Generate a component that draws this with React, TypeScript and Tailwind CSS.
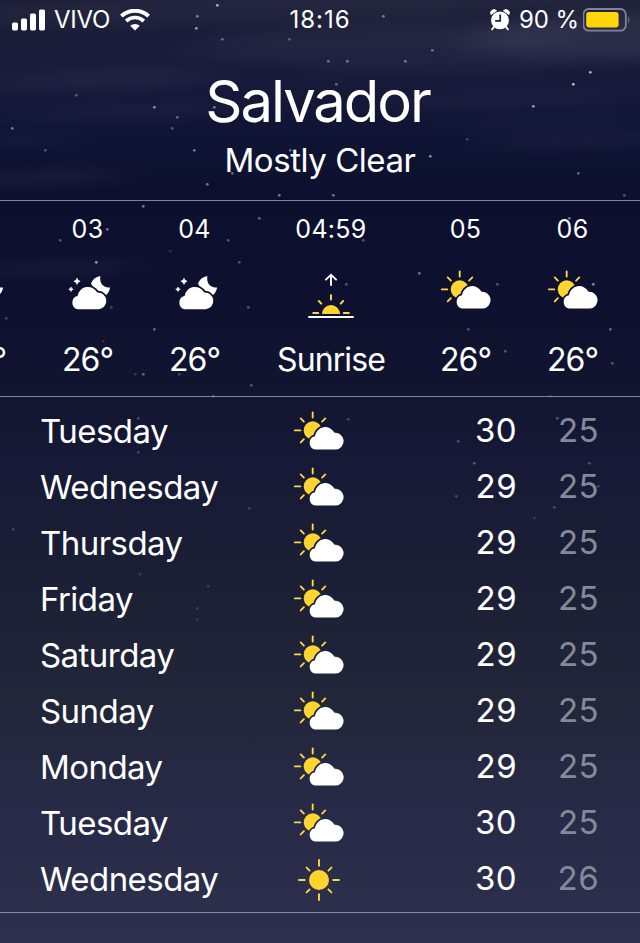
import React, { useId } from "react";

type IconName = "moon" | "partly" | "sunrise" | "sun";

const hours: { time: string; icon: IconName; value: string }[] = [
  { time: "", icon: "moon", value: "26°" },
  { time: "03", icon: "moon", value: "26°" },
  { time: "04", icon: "moon", value: "26°" },
  { time: "04:59", icon: "sunrise", value: "Sunrise" },
  { time: "05", icon: "partly", value: "26°" },
  { time: "06", icon: "partly", value: "26°" },
];

const days: { name: string; icon: IconName; high: number; low: number }[] = [
  { name: "Tuesday", icon: "partly", high: 30, low: 25 },
  { name: "Wednesday", icon: "partly", high: 29, low: 25 },
  { name: "Thursday", icon: "partly", high: 29, low: 25 },
  { name: "Friday", icon: "partly", high: 29, low: 25 },
  { name: "Saturday", icon: "partly", high: 29, low: 25 },
  { name: "Sunday", icon: "partly", high: 29, low: 25 },
  { name: "Monday", icon: "partly", high: 29, low: 25 },
  { name: "Tuesday", icon: "partly", high: 30, low: 25 },
  { name: "Wednesday", icon: "sun", high: 30, low: 26 },
];

// x, y, opacity
const stars = [
  [217, 5, 0.9], [197, 16, 0.6], [196, 28, 0.8], [222, 39, 0.5], [289, 39, 0.4], [76, 95, 0.4],
  [154, 107, 0.7], [177, 117, 0.5], [172, 128, 0.4], [12, 128, 0.6], [45, 150, 0.4], [194, 150, 0.6],
  [214, 107, 0.6], [207, 184, 0.6], [279, 195, 0.6], [232, 173, 0.5], [290, 150, 0.5], [383, 16, 0.6],
  [432, 50, 0.5], [328, 61, 0.5], [347, 61, 0.6], [405, 61, 0.6], [336, 84, 0.5], [590, 72, 0.9],
  [573, 84, 1], [533, 106, 0.8], [467, 139, 0.3], [430, 156, 0.7], [578, 173, 0.5], [333, 195, 0.6],
  [624, 195, 0.4], [143, 206, 0.6], [107, 229, 0.6], [60, 240, 0.4], [96, 262, 0.8], [228, 240, 0.4],
  [170, 251, 0.2], [239, 262, 0.4], [111, 307, 0.3], [6, 318, 0.3], [154, 329, 0.5], [103, 341, 0.2],
  [135, 374, 0.2], [143, 374, 0.5], [179, 374, 0.3], [213, 396, 0.5], [259, 218, 0.5], [363, 240, 0.4],
  [346, 284, 0.4], [419, 273, 0.6], [248, 307, 0.4], [251, 385, 0.4], [327, 352, 0.4], [569, 218, 0.6],
  [497, 284, 0.4], [593, 284, 0.7], [468, 329, 0.4], [610, 329, 0.5], [505, 351, 0.4], [612, 363, 0.4],
  [550, 396, 0.3], [138, 418, 0.3], [138, 452, 0.3], [249, 508, 0.25], [140, 574, 0.2], [208, 586, 0.2],
  [197, 608, 0.2], [197, 619, 0.15], [458, 441, 0.35], [474, 463, 0.4], [557, 418, 0.4], [589, 463, 0.35],
  [456, 496, 0.3], [554, 507, 0.3], [534, 518, 0.2], [598, 486, 0.3], [348, 419, 0.3], [13, 529, 0.25],
];

// cx, cy, rx, ry, opacity
const clouds = [
  [620, 36, 150, 24, 0.11], [380, 42, 190, 20, 0.05], [330, 4, 380, 16, 0.05], [100, 80, 120, 10, 0.06],
  [130, 112, 130, 6, 0.05], [500, 100, 130, 6, 0.05], [590, 140, 110, 6, 0.06], [540, 124, 100, 4, 0.05],
  [40, 178, 90, 7, 0.07], [20, 140, 60, 5, 0.05], [60, 268, 90, 7, 0.06], [440, 66, 130, 8, 0.04],
];

const Sky = () => (
  <svg className="absolute inset-0" width="640" height="943" viewBox="0 0 640 943">
    <defs>
      <filter id="haze" x="-60%" y="-300%" width="220%" height="700%">
        <feGaussianBlur stdDeviation="28 7" />
      </filter>
    </defs>
    {clouds.map(([cx, cy, rx, ry, o], i) => (
      <ellipse key={i} cx={cx} cy={cy} rx={rx} ry={ry} fill="#b4b4be" opacity={o} filter="url(#haze)" transform={`rotate(-2 ${cx} ${cy})`} />
    ))}
    {stars.map(([x, y, o], i) => (
      <circle key={i} cx={x + 0.3} cy={y + 0.3} r="1.4" fill="#d5daf0" opacity={o * 0.85} />
    ))}
  </svg>
);

const CLOUD = "M6.7 24.7A6.7 6.7 0 0 1 6.6 11.6A10.4 10.4 0 0 1 26.2 8.1A8.3 8.3 0 1 1 27.8 24.7Z";

const PartlyIcon = () => {
  const id = useId();
  return (
    <svg width="60" height="48" viewBox="0 0 60 48" fill="none">
      <mask id={id}>
        <rect width="60" height="48" fill="#fff" />
        <path d={CLOUD} transform="translate(19.3 17.7)" fill="#000" stroke="#000" strokeWidth="3.6" />
      </mask>
      <circle cx="23.7" cy="23.3" r="9" fill="#fed530" mask={`url(#${id})`} />
      <path
        d="M23.7 5.4v5.2M5.9 23.4h5.4M11.7 11.4l3.2 3.2M36.3 11.4l-3.2 3.2M11.7 35.4l3.2-3.2"
        stroke="#fdd54a"
        strokeWidth="1.9"
        strokeLinecap="round"
      />
      <path d={CLOUD} transform="translate(19.3 17.7)" fill="#fff" />
    </svg>
  );
};

const MoonIcon = () => {
  const id = useId();
  return (
    <svg width="60" height="48" viewBox="0 0 60 48" fill="none">
      <mask id={id}>
        <rect width="60" height="48" fill="#fff" />
        <path d={CLOUD} transform="translate(13 18.5)" fill="#000" stroke="#000" strokeWidth="3.4" />
      </mask>
      <path d="M42.4 10C37.6 10.8 34.6 13.4 33 17.6L40 30H47C49.8 27.7 51.6 24.9 52.1 21.4C45.6 22.4 41 17 42.4 10Z" fill="#fff" mask={`url(#${id})`} />
      <path d="M19 12.2Q19.4 14.9 22.1 15.3Q19.4 15.7 19 18.4Q18.6 15.7 15.9 15.3Q18.6 14.9 19 12.2Z" fill="#fff" stroke="#fff" strokeWidth=".7" />
      <path d="M13 21Q13.3 23 15.3 23.3Q13.3 23.6 13 25.6Q12.7 23.6 10.7 23.3Q12.7 23 13 21Z" fill="#fff" stroke="#fff" strokeWidth=".6" />
      <path d={CLOUD} transform="translate(13 18.5)" fill="#fff" />
    </svg>
  );
};

const SunriseIcon = () => (
  <svg width="60" height="56" viewBox="0 0 60 56" fill="none" strokeLinecap="round">
    <path d="M30 19V9M24.9 13.6L30 8.8L35.1 13.6" stroke="#fff" strokeWidth="1.9" />
    <path d="M21 48A9 9 0 0 1 39 48Z" fill="#fed530" />
    <path d="M30 29.2v4.2M17.8 35l2.5 2.6M42.2 35l-2.5 2.6M12.2 47h5M42.8 47h5" stroke="#fdd54a" strokeWidth="2" />
    <path d="M8 51h44" stroke="#fff" strokeWidth="1.9" />
  </svg>
);

const SunIcon = () => (
  <svg width="60" height="48" viewBox="0 0 60 48" fill="none">
    <circle cx="30" cy="25" r="10" fill="#fed530" />
    <path
      d="M30 5v5.8M30 39.2V45M10 25h5.8M44.2 25H50M17.6 12.6l3 3M42.4 12.6l-3 3M17.6 37.4l3-3M42.4 37.4l-3-3"
      stroke="#fdd54a"
      strokeWidth="1.9"
      strokeLinecap="round"
    />
  </svg>
);

const icons: Record<IconName, React.FC> = {
  moon: MoonIcon,
  partly: PartlyIcon,
  sunrise: SunriseIcon,
  sun: SunIcon,
};

const StatusBar = () => (
  <div className="grid h-10 grid-cols-3 items-center text-[24px] leading-10 text-white">
    <div className="flex items-center pl-3">
      <svg width="34" height="22" viewBox="0 0 34 22" fill="#fff">
        <rect x="0" y="13.4" width="6" height="8" rx="1.6" />
        <rect x="9" y="9.4" width="6" height="12" rx="1.6" />
        <rect x="18" y="4.6" width="6" height="16.8" rx="1.6" />
        <rect x="27" y="0.4" width="6" height="21" rx="1.6" />
      </svg>
      <span className="ml-[6px] w-[60px] tracking-[-0.3px]">VIVO</span>
      <svg className="ml-[8px]" width="30" height="22" viewBox="0 0 30 22" fill="none" stroke="#fff">
        <path d="M1.4 7.2A19.6 19.6 0 0 1 28.6 7.2" strokeWidth="3.9" />
        <path d="M6.2 12.1A12.6 12.6 0 0 1 23.8 12.1" strokeWidth="3.7" />
        <path d="M15 21.6L10.2 16.8A7 7 0 0 1 19.8 16.8Z" fill="#fff" stroke="none" />
      </svg>
    </div>
    <div className="text-center tracking-[1px]">18:16</div>
    <div className="flex items-center justify-end pr-[9px]">
      <svg width="20" height="22" viewBox="0 0 20 22" fill="none">
        <path d="M1 5.6A3.4 3.4 0 0 1 6.6 1.8ZM19 5.6A3.4 3.4 0 0 0 13.4 1.8Z" fill="#fff" stroke="#fff" strokeWidth=".8" strokeLinejoin="round" />
        <path d="M4.2 17.6L2 20.4M15.8 17.6L18 20.4" stroke="#fff" strokeWidth="1.8" strokeLinecap="round" />
        <circle cx="10" cy="11.4" r="8.9" fill="#fff" />
        <path d="M10.2 6v5.8H5.8" stroke="#1b1e3a" strokeWidth="1.7" strokeLinecap="round" />
      </svg>
      <span className="ml-[9px] tracking-[-0.1px] whitespace-nowrap">90 %</span>
      <svg className="ml-[4px]" width="48" height="24" viewBox="0 0 48 24" fill="none">
        <rect x="0.4" y="1" width="42.4" height="21.6" rx="5.4" stroke="#80839a" strokeWidth="1.8" />
        <rect x="3.2" y="4" width="32.4" height="15.4" rx="2.8" fill="#ffd60a" />
        <path d="M45.2 8.2Q47.4 11.8 45.2 15.4Z" fill="#80839a" />
      </svg>
    </div>
  </div>
);

export default function App() {
  return (
    <div className="relative h-[943px] w-[640px] overflow-hidden bg-[linear-gradient(180deg,#1b1e36_0px,#191c3b_60px,#111535_130px,#0c102e_200px,#0d112f_290px,#111530_390px,#161a36_470px,#1b1f35_570px,#222639_700px,#272b48_820px,#2d314e_943px)] font-['Inter','Liberation_Sans',sans-serif] text-white">
      <Sky />
      <div className="relative">
        <header className="h-[201px] border-b border-[#7f8398] text-center">
          <StatusBar />
          <h1 className="mt-[23px] -ml-[5px] text-[58px] leading-[76px] font-normal tracking-[-2.1px]">Salvador</h1>
          <p className="text-[33px] leading-[42px] tracking-[-0.45px]">Mostly Clear</p>
        </header>

        <section className="-ml-[73px] flex h-[196px] w-[713px] border-b border-[#7f8398]">
          {hours.map((h, i) => {
            const Icon = icons[h.icon];
            return (
              <div
                key={i}
                className={`flex shrink-0 flex-col items-center pt-[13px] ${h.icon === "sunrise" ? "w-[164px] pl-[2px]" : "w-[107px]"}`}
              >
                <span className="h-[30px] text-[25px] leading-[30px] tracking-[0.3px]">{h.time}</span>
                <div className="mt-[22px] h-14">
                  <Icon />
                </div>
                <span className="mt-[18px] text-[32px] leading-10 tracking-[-0.9px]">{h.value}</span>
              </div>
            );
          })}
        </section>

        <section className="h-[516px] border-b border-[#8a8da0] pt-[6px] pr-[41px] pl-[40px]">
          {days.map((d, i) => {
            const Icon = icons[d.icon];
            return (
              <div key={i} className="flex h-14 items-center text-[33px] leading-[56px]">
                <span className="w-[249px] tracking-[-0.55px]">{d.name}</span>
                <Icon />
                <span className="-mt-[2px] flex-1 text-right tracking-[0.4px]">{d.high}</span>
                <span className="-mt-[2px] w-[82px] text-right tracking-[0.4px] text-[#868999]">{d.low}</span>
              </div>
            );
          })}
        </section>
      </div>
    </div>
  );
}
